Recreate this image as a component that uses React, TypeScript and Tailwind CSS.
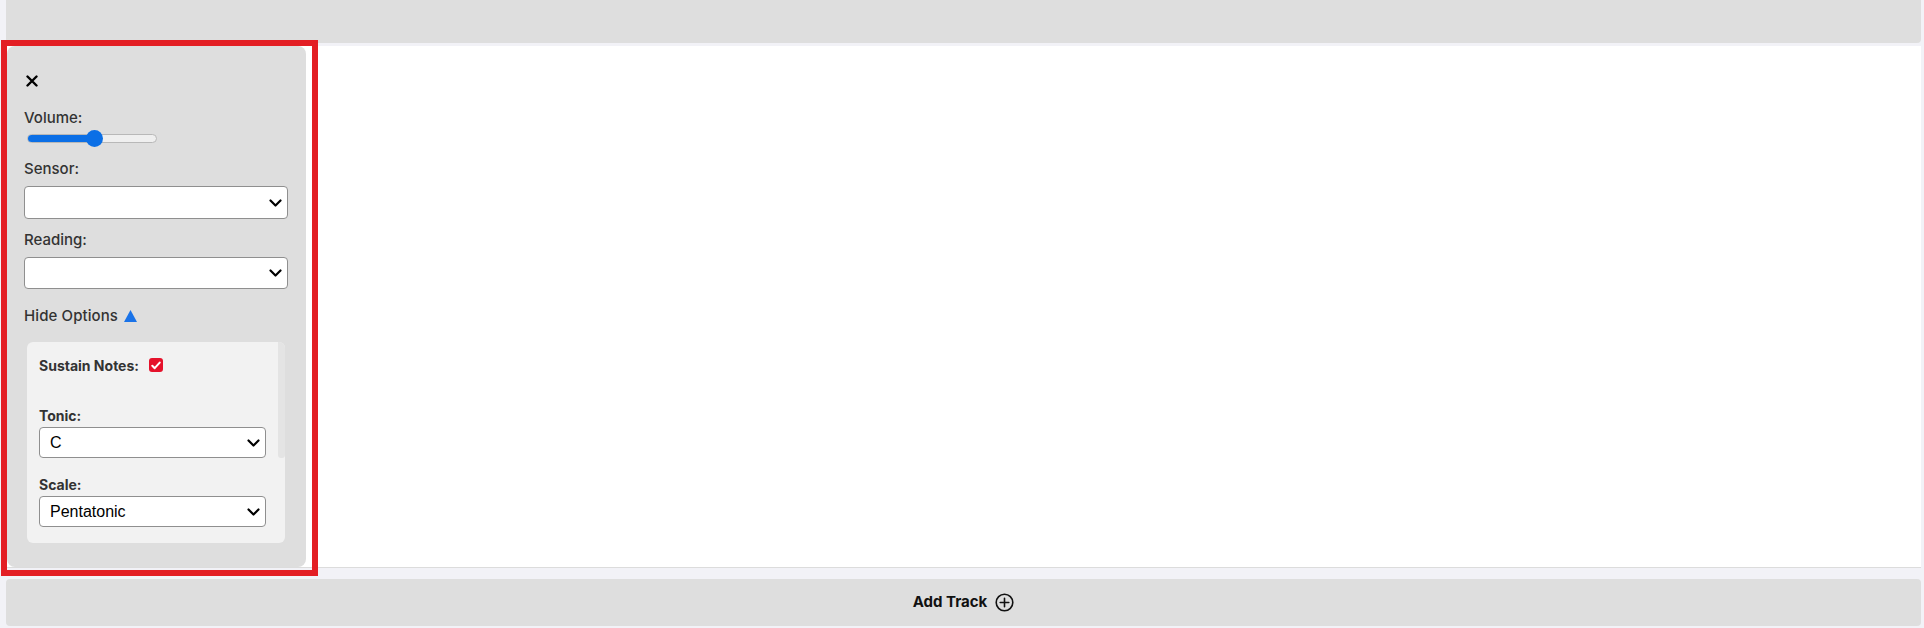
import React from "react";

const Chevron = () => (
  <svg
    className="pointer-events-none absolute right-[6px] top-1/2 -translate-y-1/2"
    width="13"
    height="8"
    viewBox="0 0 13 8"
    fill="none"
  >
    <path d="M1.5 1.5l5 5 5-5" stroke="#000" strokeWidth="2.2" strokeLinecap="round" strokeLinejoin="round" />
  </svg>
);

function Select({ value, className }: { value: string; className: string }) {
  return (
    <div className={"relative " + className}>
      <select
        defaultValue={value}
        className="block h-full w-full appearance-none rounded-[4px] border border-[#8f8f8f] bg-white pl-[10px] font-['Liberation_Sans',Arial,sans-serif] text-[16px] text-black outline-none"
      >
        <option value={value}>{value}</option>
      </select>
      <Chevron />
    </div>
  );
}

export default function App() {
  return (
    <div className="relative h-[628px] w-full overflow-hidden bg-[#f2f2f7] font-['Inter',sans-serif] text-[#333]">
      {/* top bar */}
      <div className="ml-[6px] mr-[3px] h-[43px] rounded-b-[4px] bg-[#dedede]" />

      {/* main row */}
      <div className="ml-[7px] mr-[3px] mt-[3px] flex h-[522px] border-b border-[#dcdcdc] bg-white">
        <div className="flex w-[299px] flex-col rounded-[8px] bg-[#dedede] pl-[17px]">
          <svg className="ml-[2px] mt-[29px]" width="12" height="12" viewBox="0 0 12 12">
            <path d="M1.5 1.5l9 9M10.5 1.5l-9 9" stroke="#000" strokeWidth="2.4" strokeLinecap="round" />
          </svg>

          <div className="mt-[21px] h-[20px] text-[15px] font-medium leading-[20px]">Volume:</div>

          <div className="relative ml-[3px] mt-[2px] flex h-[17px] w-[130px] items-center">
            <div className="flex h-[9px] w-full overflow-hidden rounded-full border border-[#b8b8b8] bg-[#efefef]">
              <div className="h-full w-[52%] bg-[#0b6fe6]" />
            </div>
            <div className="absolute left-[59px] top-0 h-[17px] w-[17px] rounded-full bg-[#0b6fe6]" />
          </div>

          <div className="mt-[12px] h-[20px] text-[15px] font-medium leading-[20px]">Sensor:</div>
          <Select value="" className="mt-[7px] h-[33px] w-[264px]" />

          <div className="mt-[11px] h-[20px] text-[15px] font-medium leading-[20px]">Reading:</div>
          <Select value="" className="mt-[7px] h-[32px] w-[264px]" />

          <div className="mt-[17px] flex h-[20px] items-center gap-[6px] text-[15px] font-medium leading-[20px]">
            <span className="tracking-[0.1px]">Hide Options</span>
            <svg width="13" height="12" viewBox="0 0 13 12">
              <polygon points="6.5,0 13,12 0,12" fill="#1a73e8" />
            </svg>
          </div>

          <div className="ml-[3px] mt-[16px] flex h-[201px] w-[258px] overflow-hidden rounded-[6px] bg-[#f2f2f2]">
            <div className="flex flex-1 flex-col pl-[12px]">
              <div className="mt-[13px] flex h-[20px] items-center text-[14px] font-bold">
                <span>Sustain Notes:</span>
                <span className="ml-[10px] flex h-[14px] w-[14px] items-center justify-center rounded-[3px] bg-[#e5122b]">
                  <svg width="10" height="9" viewBox="0 0 10 9">
                    <path d="M1.3 4.8l2.4 2.4L8.7 1.6" stroke="#fff" strokeWidth="2" fill="none" strokeLinecap="round" strokeLinejoin="round" />
                  </svg>
                </span>
              </div>

              <div className="mt-[31px] h-[20px] text-[14px] font-bold leading-[20px]">Tonic:</div>
              <Select value="C" className="mt-[1px] h-[31px] w-[227px]" />

              <div className="mt-[17px] h-[20px] text-[14px] font-bold leading-[20px]">Scale:</div>
              <Select value="Pentatonic" className="mt-[1px] h-[31px] w-[227px]" />
            </div>
            <div className="w-[7px]">
              <div className="h-[116px] w-full rounded-b-[3px] bg-[#e4e4e4]" />
            </div>
          </div>
        </div>
        <div className="flex-1" />
      </div>

      {/* bottom bar */}
      <div className="ml-[6px] mr-[3px] mt-[11px] flex h-[47px] items-center justify-center gap-[8px] rounded-[4px] bg-[#dedede] text-[15px] font-bold text-[#111]">
        <span>Add Track</span>
        <svg width="19" height="19" viewBox="0 0 19 19" fill="none">
          <circle cx="9.5" cy="9.5" r="8.3" stroke="#111" strokeWidth="1.6" />
          <path d="M9.5 5.2v8.6M5.2 9.5h8.6" stroke="#111" strokeWidth="1.6" strokeLinecap="round" />
        </svg>
      </div>

      {/* red highlight annotation */}
      <div className="pointer-events-none absolute left-[1px] top-[40px] h-[536px] w-[317px] border-[6px] border-[#e31e24]" />
    </div>
  );
}
